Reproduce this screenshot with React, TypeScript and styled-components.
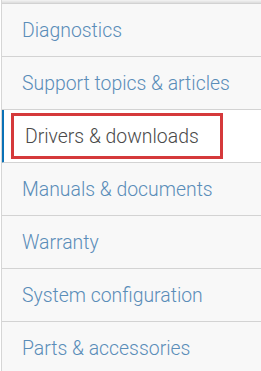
import React from 'react'
import styled, { createGlobalStyle } from 'styled-components'

const GlobalStyle = createGlobalStyle`
  body {
    margin: 0;
    background: #fff;
    font-family: 'Roboto Light', Roboto, 'Liberation Sans', sans-serif;
  }
`

const Panel = styled.nav`
  width: 261px;
  height: 371px;
  overflow: hidden;
  background: #f8f8f8;
  border-left: 1px solid #d6d6d6;
  margin-left: 1px;
  box-sizing: border-box;
`

const TopEdge = styled.div`
  height: 4px;
  background: linear-gradient(#f4f4f4, #dcdcdc);
  border-bottom: 1px solid #d2d2d2;
  box-sizing: border-box;
`

const Row = styled.a<{ $active?: boolean }>`
  display: flex;
  align-items: center;
  height: 53px;
  box-sizing: border-box;
  border-bottom: 1px solid #d3d3d3;
  padding-left: ${({ $active }) => ($active ? '7px' : '20px')};
  margin-left: ${({ $active }) => ($active ? '-2px' : '0')};
  border-left: ${({ $active }) => ($active ? '4px solid #0a72b7' : 'none')};
  background: ${({ $active }) => ($active ? '#fff' : '#f8f8f8')};
  color: ${({ $active }) => ($active ? '#4a4a4a' : '#5a8db8')};
  font-size: 19.4px;
  font-weight: 300;
  text-decoration: none;
  white-space: nowrap;
`

const Highlight = styled.span`
  display: flex;
  align-items: center;
  width: 212px;
  height: 46px;
  box-sizing: border-box;
  border: 3px solid #d5393b;
  padding-left: 11px;
`

const items = [
  'Diagnostics',
  'Support topics & articles',
  'Drivers & downloads',
  'Manuals & documents',
  'Warranty',
  'System configuration',
  'Parts & accessories',
]

export default function App() {
  return (
    <>
      <GlobalStyle />
      <Panel>
        <TopEdge />
        {items.map((label) =>
          label === 'Drivers & downloads' ? (
            <Row key={label} $active>
              <Highlight>{label}</Highlight>
            </Row>
          ) : (
            <Row key={label}>{label}</Row>
          ),
        )}
      </Panel>
    </>
  )
}
